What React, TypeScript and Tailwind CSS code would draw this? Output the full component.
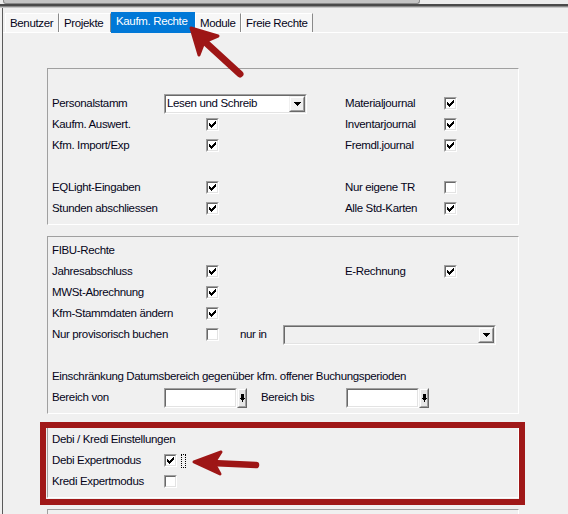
import React from "react";

const Check = ({ checked = false }: { checked?: boolean }) => (
  <div className="w-[13px] h-[13px] shrink-0 border border-t-[#a0a0a0] border-l-[#a0a0a0] border-r-white border-b-white">
    <div className="w-full h-full border border-t-[#696969] border-l-[#696969] border-r-[#e3e3e3] border-b-[#e3e3e3] bg-white flex items-center justify-center">
      {checked && (
        <svg width="7" height="7" viewBox="0 0 7 7" shapeRendering="crispEdges">
          <rect x="6" y="0" width="1" height="1" fill="#000" />
          <rect x="5" y="1" width="2" height="1" fill="#000" />
          <rect x="0" y="2" width="1" height="1" fill="#000" />
          <rect x="4" y="2" width="3" height="1" fill="#000" />
          <rect x="0" y="3" width="2" height="1" fill="#000" />
          <rect x="3" y="3" width="3" height="1" fill="#000" />
          <rect x="0" y="4" width="5" height="1" fill="#000" />
          <rect x="1" y="5" width="3" height="1" fill="#000" />
          <rect x="2" y="6" width="1" height="1" fill="#000" />
        </svg>
      )}
    </div>
  </div>
);

const DropButton = () => (
  <div className="w-[16px] h-full shrink-0 border border-t-[#f0f0f0] border-l-[#f0f0f0] border-r-[#696969] border-b-[#696969]">
    <div className="w-full h-full border border-t-white border-l-white border-r-[#a0a0a0] border-b-[#a0a0a0] bg-[#f0f0f0] flex items-center justify-center">
      <svg width="7" height="4" viewBox="0 0 7 4" shapeRendering="crispEdges">
        <rect x="0" y="0" width="7" height="1" fill="#000" />
        <rect x="1" y="1" width="5" height="1" fill="#000" />
        <rect x="2" y="2" width="3" height="1" fill="#000" />
        <rect x="3" y="3" width="1" height="1" fill="#000" />
      </svg>
    </div>
  </div>
);

const Combo = ({ width, text = "", disabled = false }: { width: string; text?: string; disabled?: boolean }) => (
  <div className={`${width} h-[20px] shrink-0 border border-t-[#a0a0a0] border-l-[#a0a0a0] border-r-white border-b-white`}>
    <div
      className={`w-full h-full border border-t-[#696969] border-l-[#696969] border-r-[#e3e3e3] border-b-[#e3e3e3] flex items-stretch ${
        disabled ? "bg-[#f0f0f0]" : "bg-white"
      }`}
    >
      <div className="flex-1 flex items-center pl-[1px] overflow-hidden whitespace-nowrap">{text}</div>
      <DropButton />
    </div>
  </div>
);

const SpinEdit = () => (
  <div className="flex items-stretch h-[20px] shrink-0">
    <div className="w-[73px] h-full border border-t-[#a0a0a0] border-l-[#a0a0a0] border-r-white border-b-white">
      <div className="w-full h-full border border-t-[#696969] border-l-[#696969] border-r-[#e3e3e3] border-b-[#e3e3e3] bg-white" />
    </div>
    <div className="w-[10px] h-full border border-t-[#f0f0f0] border-l-[#f0f0f0] border-r-[#696969] border-b-[#696969]">
      <div className="w-full h-full border border-t-white border-l-white border-r-[#a0a0a0] border-b-[#a0a0a0] bg-[#e6e6e6] flex items-center justify-center">
        <svg width="5" height="8" viewBox="0 0 5 8" shapeRendering="crispEdges">
          <rect x="1" y="0" width="3" height="4" fill="#000" />
          <rect x="0" y="4" width="5" height="1" fill="#000" />
          <rect x="1" y="5" width="3" height="1" fill="#000" />
          <rect x="2" y="6" width="1" height="2" fill="#000" />
        </svg>
      </div>
    </div>
  </div>
);

const Row = ({ children }: { children?: React.ReactNode }) => (
  <div className="h-[21px] flex items-center whitespace-nowrap">{children}</div>
);

const Group = ({ children, className = "" }: { children?: React.ReactNode; className?: string }) => (
  <div
    className={`w-[472px] border border-t-[#a0a0a0] border-l-[#a0a0a0] border-r-white border-b-white pl-[4px] ${className}`}
  >
    {children}
  </div>
);

const LeftCheck = ({ label, checked }: { label: string; checked?: boolean }) => (
  <div className="flex w-[293px] items-center">
    <span className="w-[154px]">{label}</span>
    <Check checked={checked} />
  </div>
);

const RightCheck = ({ label, checked }: { label: string; checked?: boolean }) => (
  <div className="flex items-center">
    <span className="w-[99px]">{label}</span>
    <Check checked={checked} />
  </div>
);

const tabs = [
  { name: "Benutzer", w: "w-[54px]" },
  { name: "Projekte", w: "w-[52px]" },
  { name: "Kaufm. Rechte", w: "w-[84px]", active: true },
  { name: "Module", w: "w-[46px]" },
  { name: "Freie Rechte", w: "w-[72px]" },
];

export default function App() {
  return (
    <div className="relative w-[568px] h-[514px] overflow-hidden bg-[#f0f0f0] text-[#05051a] text-[11.5px] tracking-[-0.35px] leading-none font-['Liberation_Sans',Arial,sans-serif]">
      {/* top window frame */}
      <div className="h-[4px] bg-[#ececec]">
        <div className="ml-[3px] w-[417px] h-[4px] bg-[#c4c4c4] border-l border-r border-b border-[#8a8a8a] rounded-b-[3px]" />
      </div>
      <div className="h-[2px] bg-[#4a4a4a]" />
      <div className="h-[1px] bg-[#8a8a8a]" />
      <div className="h-[1px] bg-[#c8c8c8]" />

      {/* panel */}
      <div className="ml-[2px] border-l border-[#5a5a5a] h-[506px]">
        {/* tabs */}
        <div className="h-[24px] flex items-end pl-[2px]">
          {tabs.map((t) =>
            t.active ? (
              <div
                key={t.name}
                className={`${t.w} h-[21px] -mb-[1px] relative z-10 bg-[#0078d7] text-white flex items-start pt-[4px] pl-[5px]`}
              >
                {t.name}
              </div>
            ) : (
              <div
                key={t.name}
                className={`${t.w} h-[19px] bg-[#f7f7f7] border-l border-t border-white border-r border-r-[#8a8a8a] flex items-center pl-[4px] pt-[1px]`}
              >
                {t.name}
              </div>
            )
          )}
        </div>
        <div className="h-[1px] bg-white" />

        {/* content */}
        <div className="pt-[35px] pl-[44px] flex flex-col gap-[11px]">
          <Group className="pt-[24px] pb-[5px]">
            <Row>
              <div className="flex w-[293px] items-center">
                <span className="w-[112px]">Personalstamm</span>
                <Combo width="w-[143px]" text="Lesen und Schreib" />
              </div>
              <RightCheck label="Materialjournal" checked />
            </Row>
            <Row>
              <LeftCheck label="Kaufm. Auswert." checked />
              <RightCheck label="Inventarjournal" checked />
            </Row>
            <Row>
              <LeftCheck label="Kfm. Import/Exp" checked />
              <RightCheck label="Fremdl.journal" checked />
            </Row>
            <Row />
            <Row>
              <LeftCheck label="EQLight-Eingaben" checked />
              <RightCheck label="Nur eigene TR" />
            </Row>
            <Row>
              <LeftCheck label="Stunden abschliessen" checked />
              <RightCheck label="Alle Std-Karten" checked />
            </Row>
          </Group>

          <Group className="pt-[3px] pb-[5px]">
            <Row>
              <span>FIBU-Rechte</span>
            </Row>
            <Row>
              <LeftCheck label="Jahresabschluss" checked />
              <RightCheck label="E-Rechnung" checked />
            </Row>
            <Row>
              <LeftCheck label="MWSt-Abrechnung" checked />
            </Row>
            <Row>
              <LeftCheck label="Kfm-Stammdaten ändern" checked />
            </Row>
            <Row>
              <span className="w-[154px]">Nur provisorisch buchen</span>
              <Check />
              <span className="ml-[21px] w-[43px]">nur in</span>
              <Combo width="w-[213px]" disabled />
            </Row>
            <Row />
            <Row>
              <span>Einschränkung Datumsbereich gegenüber kfm. offener Buchungsperioden</span>
            </Row>
            <Row>
              <span className="w-[112px]">Bereich von</span>
              <SpinEdit />
              <span className="ml-[14px] w-[85px]">Bereich bis</span>
              <SpinEdit />
            </Row>
          </Group>

          <Group className="pt-[3px] pb-[5px]">
            <Row>
              <span>Debi / Kredi Einstellungen</span>
            </Row>
            <Row>
              <span className="w-[112px]">Debi Expertmodus</span>
              <Check checked />
              <div className="ml-[4px] w-[5px] h-[14px] border border-dotted border-black" />
            </Row>
            <Row>
              <span className="w-[112px]">Kredi Expertmodus</span>
              <Check />
            </Row>
          </Group>

          <Group className="h-[20px]" />
        </div>
      </div>

      {/* red highlight box */}
      <div className="absolute left-[40px] top-[422px] w-[485px] h-[83px] border-[6px] border-[#a01818] pointer-events-none" />

      {/* arrows */}
      <svg className="absolute left-0 top-0 pointer-events-none z-20" width="568" height="514" viewBox="0 0 568 514">
        <line x1="204" y1="41" x2="240" y2="74" stroke="#9e1616" strokeWidth="7" strokeLinecap="round" />
        <polygon points="191,28 218,36 204,42 199,55" fill="#9e1616" stroke="#9e1616" strokeWidth="3" strokeLinejoin="round" />
        <line x1="212" y1="463" x2="256" y2="465" stroke="#9e1616" strokeWidth="6.5" strokeLinecap="round" />
        <polygon points="194,462 221,452 214,463 220,474" fill="#9e1616" stroke="#9e1616" strokeWidth="3" strokeLinejoin="round" />
      </svg>
    </div>
  );
}
